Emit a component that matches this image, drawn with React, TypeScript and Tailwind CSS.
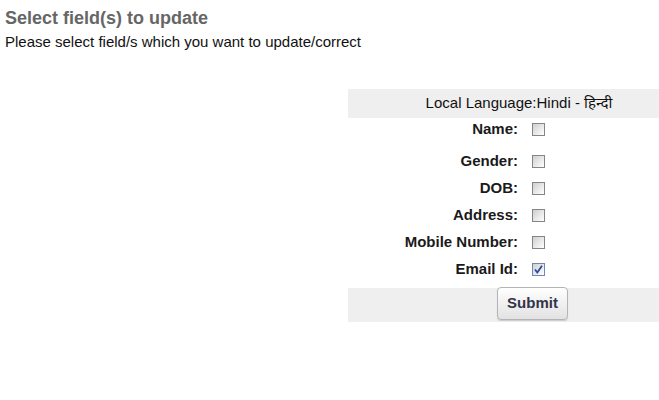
import { useState } from 'react'

const fields = [
  { key: 'gender', label: 'Gender:' },
  { key: 'dob', label: 'DOB:' },
  { key: 'address', label: 'Address:' },
  { key: 'mobile', label: 'Mobile Number:' },
  { key: 'email', label: 'Email Id:' },
]

function Box({ checked, onClick }: { checked: boolean; onClick: () => void }) {
  return (
    <button
      type="button"
      onClick={onClick}
      className={`relative w-[13px] h-[13px] border ${checked ? 'border-[#6f86b8]' : 'border-[#858585]'} bg-gradient-to-br from-[#cfcfcf] to-white p-0`}
    >
      {checked && (
        <svg viewBox="0 0 13 13" className="absolute -left-px -top-px w-[13px] h-[13px]">
          <path d="M3 6.5 L5.3 9.5 L10 2.8" fill="none" stroke="#2c4a9c" strokeWidth="1.8" />
        </svg>
      )}
    </button>
  )
}

export default function App() {
  const [checked, setChecked] = useState<Record<string, boolean>>({ email: true })
  const toggle = (k: string) => setChecked((c) => ({ ...c, [k]: !c[k] }))

  return (
    <div className="w-[659px] h-[400px] bg-white overflow-hidden font-['Liberation_Sans',Arial,'Noto_Sans_Devanagari','Lohit_Devanagari',sans-serif]">
      {/* Header */}
      <div className="pl-[5px] pt-[8px]">
        <h1 className="text-[18px] leading-[20px] font-bold text-[#666666]">Select field(s) to update</h1>
        <p className="mt-[6px] text-[15px] leading-[16px] text-[#111111]">
          Please select field/s which you want to update/correct
        </p>
      </div>

      {/* Form table */}
      <div className="ml-[348px] mt-[39px] w-[311px]">
        <div className="h-[29px] bg-[#efefef] flex items-center justify-center pl-[31px] text-[15px] text-[#111111]">
          Local Language:Hindi - हिन्दी
        </div>

        <div className="h-[22px] mb-[8px] flex items-center">
          <div className="w-[174px] pr-[4px] text-right text-[15px] font-bold text-[#1a1a1a]">Name:</div>
          <div className="pl-[10px] flex items-center">
            <Box checked={!!checked.name} onClick={() => toggle('name')} />
          </div>
        </div>

        {fields.map((f) => (
          <div key={f.key} className="h-[27px] flex items-center">
            <div className="w-[174px] pr-[4px] text-right text-[15px] font-bold text-[#1a1a1a]">{f.label}</div>
            <div className="pl-[10px] flex items-center">
              <Box checked={!!checked[f.key]} onClick={() => toggle(f.key)} />
            </div>
          </div>
        ))}

        <div className="mt-[5px] h-[34px] bg-[#efefef] flex items-start">
          <button
            type="button"
            className="ml-[149px] -mt-px w-[71px] h-[33px] rounded-[4px] border border-[#b4b4b4] bg-gradient-to-b from-white to-[#e2e2e2] shadow-[0_1px_1px_rgba(0,0,0,0.15)] text-[15px] font-bold text-[#33334a]"
          >
            Submit
          </button>
        </div>
      </div>
    </div>
  )
}
